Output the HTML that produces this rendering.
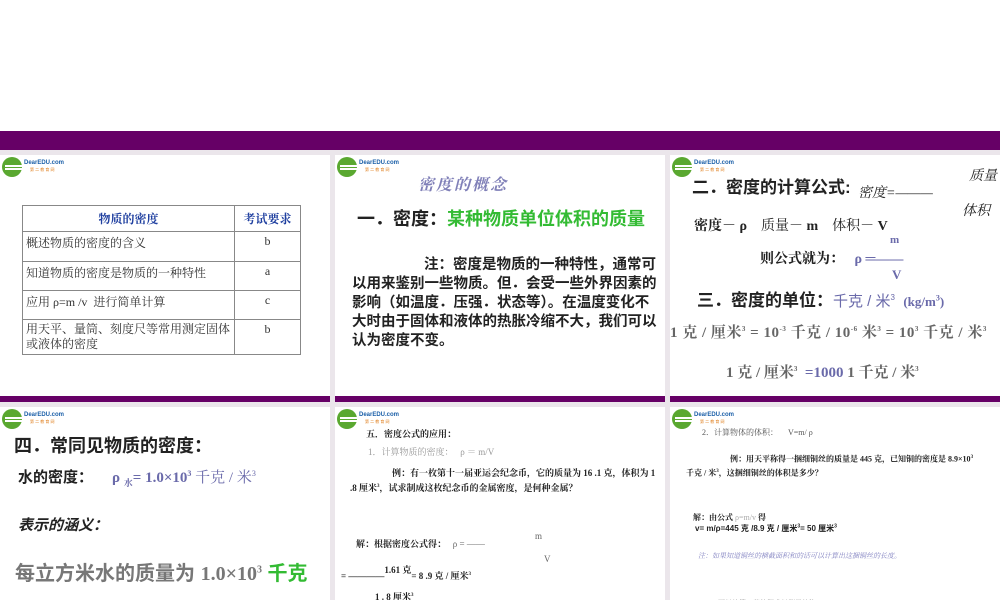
<!DOCTYPE html>
<html><head><meta charset="utf-8"><style>
body{margin:0;width:1000px;height:600px;overflow:hidden;background:#fff;position:relative;font-family:"Liberation Serif","Noto Serif CJK SC","Noto Sans CJK SC",serif;}
.abs{position:absolute;}
.bg{left:0;top:150px;width:1000px;height:450px;background:#ebe6eb;}
.band{left:0;top:131px;width:1000px;height:19px;background:#660066;}
.slide{position:absolute;background:#fff;overflow:hidden;}
.pb{position:absolute;height:6px;background:#660066;}
.logo{position:absolute;left:2px;top:2px;width:62px;height:20px;}
.logo .c{position:absolute;left:0;top:0;width:20px;height:20px;border-radius:50%;background:#5aa830;}
.logo .l{position:absolute;left:3px;width:22px;height:1.5px;background:#fff;}
.logo .t{position:absolute;left:22px;top:3px;font:bold 6px "Liberation Sans",sans-serif;color:#1b5fa8;}
.logo .t2{position:absolute;left:28px;top:10px;font:4px sans-serif;color:#e08020;}
.s{font-family:"Liberation Sans","Noto Sans CJK SC",sans-serif;}
table{border-collapse:collapse;font-size:12px;}
td{border:1px solid #888;vertical-align:top;padding:2px 3px;color:#333;}
.b{font-weight:bold;}
</style></head><body>
<div class="abs bg"></div>
<div class="abs band"></div>

<!-- slide 1 -->
<div class="slide" style="left:0;top:155px;width:330px;height:241px;">
 <div class="logo"><div class="c"></div><div class="l" style="top:8px"></div><div class="l" style="top:11px"></div><div class="t">DearEDU.com</div><div class="t2">第 二 教 育 网</div></div>
 <table class="abs" style="left:22px;top:50px;width:279px;">
  <tr style="height:26px"><td class="b" style="text-align:center;color:#2040a0;width:205px;vertical-align:middle">物质的密度</td><td class="b" style="text-align:center;color:#2040a0;vertical-align:middle">考试要求</td></tr>
  <tr style="height:30px"><td>概述物质的密度的含义</td><td style="text-align:center">b</td></tr>
  <tr style="height:29px"><td>知道物质的密度是物质的一种特性</td><td style="text-align:center">a</td></tr>
  <tr style="height:29px"><td>应用 ρ=m /v&nbsp; 进行简单计算</td><td style="text-align:center">c</td></tr>
  <tr style="height:34px"><td style="line-height:15px">用天平、量筒、刻度尺等常用测定固体或液体的密度</td><td style="text-align:center">b</td></tr>
 </table>
</div>
<div class="pb" style="left:0;top:396px;width:330px"></div>

<!-- slide 2 -->
<div class="slide" style="left:335px;top:155px;width:330px;height:241px;">
 <div class="logo"><div class="c"></div><div class="l" style="top:8px"></div><div class="l" style="top:11px"></div><div class="t">DearEDU.com</div><div class="t2">第 二 教 育 网</div></div>
 <div class="abs b" style="left:83px;top:17px;font-size:16px;color:#8080b8;font-style:italic;letter-spacing:2px">密度的概念</div>
 <div class="abs s b" style="left:22px;top:50px;font-size:18px;color:#222">一．密度：<span style="color:#33bb33">某种物质单位体积的质量</span></div>
 <div class="abs s b" style="left:17px;top:101px;width:307px;font-size:14.5px;line-height:19px;color:#222;text-indent:72px">注：密度是物质的一种特性，通常可以用来鉴别一些物质。但．会受一些外界因素的影响（如温度．压强．状态等）。在温度变化不大时由于固体和液体的热胀冷缩不大，我们可以认为密度不变。</div>
</div>
<div class="pb" style="left:335px;top:396px;width:330px"></div>

<!-- slide 3 -->
<div class="slide" style="left:670px;top:155px;width:330px;height:241px;">
 <div class="logo"><div class="c"></div><div class="l" style="top:8px"></div><div class="l" style="top:11px"></div><div class="t">DearEDU.com</div><div class="t2">第 二 教 育 网</div></div>
 <div class="abs s b" style="left:22px;top:18px;font-size:17px;color:#222">二．密度的计算公式:</div>
 <div class="abs" style="left:188px;top:27px;font-size:14px;font-style:italic;color:#222">密度=———</div>
 <div class="abs" style="left:299px;top:10px;font-size:14px;font-style:italic;color:#222">质量</div>
 <div class="abs" style="left:292px;top:45px;font-size:14px;font-style:italic;color:#222">体积</div>
 <div class="abs b" style="left:24px;top:60px;font-size:14px;color:#222">密度－ ρ&nbsp;&nbsp;&nbsp; <span style="font-weight:normal">质量－</span> m&nbsp;&nbsp;&nbsp; <span style="font-weight:normal">体积－</span> V</div>
 <div class="abs b" style="left:220px;top:79px;font-size:11px;color:#6a6aaa">m</div>
 <div class="abs b" style="left:90px;top:93px;font-size:14px;color:#222">则公式就为：&nbsp;&nbsp; <span style="color:#6a6aaa">ρ ═——</span></div>
 <div class="abs b" style="left:222px;top:112px;font-size:13px;color:#6a6aaa">V</div>
 <div class="abs s b" style="left:27px;top:131px;font-size:17px;color:#222">三．密度的单位：<span style="color:#6a6aaa;font-size:15px;font-weight:normal">千克 / 米<sup style="font-size:8px">3</sup>&nbsp; <b style="font-family:'Liberation Serif',serif;font-size:13px">(kg/m<sup style="font-size:8px">3</sup>)</b></span></div>
 <div class="abs b" style="left:0;top:166px;font-size:15px;color:#666;white-space:nowrap;letter-spacing:0.5px">1 克 / 厘米<sup style="font-size:7px">3</sup> = 10<sup style="font-size:7px">-3</sup> 千克 / 10<sup style="font-size:7px">-6</sup> 米<sup style="font-size:7px">3</sup> = 10<sup style="font-size:7px">3</sup> 千克 / 米<sup style="font-size:7px">3</sup></div>
 <div class="abs b" style="left:56px;top:206px;font-size:15px;color:#666;white-space:nowrap">1 克 / 厘米<sup style="font-size:7px">3</sup>&nbsp; <span style="color:#6a6aaa">=1000</span> 1 千克 / 米<sup style="font-size:7px">3</sup></div>
</div>
<div class="pb" style="left:670px;top:396px;width:330px"></div>

<!-- slide 4 -->
<div class="slide" style="left:0;top:407px;width:330px;height:193px;">
 <div class="logo"><div class="c"></div><div class="l" style="top:8px"></div><div class="l" style="top:11px"></div><div class="t">DearEDU.com</div><div class="t2">第 二 教 育 网</div></div>
 <div class="abs s b" style="left:14px;top:25px;font-size:18px;color:#222">四．常同见物质的密度：</div>
 <div class="abs s b" style="left:18px;top:59px;font-size:15px;color:#222">水的密度：</div>
 <div class="abs b" style="left:112px;top:59px;font-size:15px;color:#6a6aaa;white-space:nowrap">ρ <sub style="font-size:9px">水</sub>= 1.0×10<sup style="font-size:8px">3</sup> <span style="font-weight:normal">千克 / 米<sup style="font-size:8px">3</sup></span></div>
 <div class="abs s b" style="left:18px;top:107px;font-size:15px;font-style:italic;color:#222">表示的涵义：</div>
 <div class="abs s b" style="left:15px;top:150px;font-size:20px;color:#777;white-space:nowrap">每立方米水的质量为 <span style="font-family:'Liberation Serif',serif">1.0×10<sup style="font-size:10px">3</sup></span> <span style="color:#33bb33">千克</span></div>
</div>

<!-- slide 5 -->
<div class="slide" style="left:335px;top:407px;width:330px;height:193px;">
 <div class="logo"><div class="c"></div><div class="l" style="top:8px"></div><div class="l" style="top:11px"></div><div class="t">DearEDU.com</div><div class="t2">第 二 教 育 网</div></div>
 <div class="abs b" style="left:31px;top:20px;font-size:9px;color:#222">五．密度公式的应用：</div>
 <div class="abs" style="left:33px;top:38px;font-size:9px;color:#999">1．计算物质的密度：&nbsp;&nbsp; ρ ＝ m/V</div>
 <div class="abs b" style="left:15px;top:60px;width:310px;font-size:9px;line-height:13px;color:#222;text-indent:42px">例：有一枚第十一届亚运会纪念币，它的质量为 16 .1 克，体积为 1 .8 厘米<sup style="font-size:5px">3</sup>，试求制成这枚纪念币的金属密度，是何种金属？</div>
 <div class="abs b" style="left:21px;top:130px;font-size:9px;color:#222">解：根据密度公式得：&nbsp;&nbsp; <span style="font-weight:normal;color:#666">ρ = ——</span></div>
 <div class="abs" style="left:200px;top:124px;font-size:9px;color:#666">m</div>
 <div class="abs" style="left:209px;top:147px;font-size:9px;color:#666">V</div>
 <div class="abs b" style="left:6px;top:162px;font-size:9px;color:#222;white-space:nowrap">= ————<span style="position:relative;top:-6px">1.61 克</span>= 8 .9 克 / 厘米<sup style="font-size:5px">3</sup></div>
 <div class="abs b" style="left:40px;top:183px;font-size:9px;color:#222">1 . 8 厘米<sup style="font-size:5px">3</sup></div>
</div>

<!-- slide 6 -->
<div class="slide" style="left:670px;top:407px;width:330px;height:193px;">
 <div class="logo"><div class="c"></div><div class="l" style="top:8px"></div><div class="l" style="top:11px"></div><div class="t">DearEDU.com</div><div class="t2">第 二 教 育 网</div></div>
 <div class="abs" style="left:32px;top:20px;font-size:8px;color:#555">2．计算物体的体积：&nbsp;&nbsp;&nbsp;&nbsp; V=m/ ρ</div>
 <div class="abs b" style="left:16px;top:45px;width:290px;font-size:8px;line-height:12px;color:#222;text-indent:44px">例：用天平称得一捆细铜丝的质量是 445 克，已知铜的密度是 8.9×10<sup style="font-size:5px">3</sup> 千克 / 米<sup style="font-size:5px">3</sup>，这捆细铜丝的体积是多少？</div>
 <div class="abs b" style="left:23px;top:105px;font-size:8px;color:#222">解：由公式 <span style="font-weight:normal;color:#aaa">ρ=m/v</span> 得</div>
 <div class="abs b s" style="left:25px;top:116px;font-size:8px;color:#222">v= m/ρ=445 克 /8.9 克 / 厘米<sup style="font-size:5px">3</sup>= 50 厘米<sup style="font-size:5px">3</sup></div>
 <div class="abs" style="left:28px;top:144px;font-size:7px;color:#8080c0;font-style:italic">注：如果知道铜丝的横截面积和的话可以计算出这捆铜丝的长度。</div>
 <div class="abs" style="left:48px;top:191px;font-size:7px;color:#aaa">可以计算一些体积难以测量的物</div>
</div>
</body></html>
